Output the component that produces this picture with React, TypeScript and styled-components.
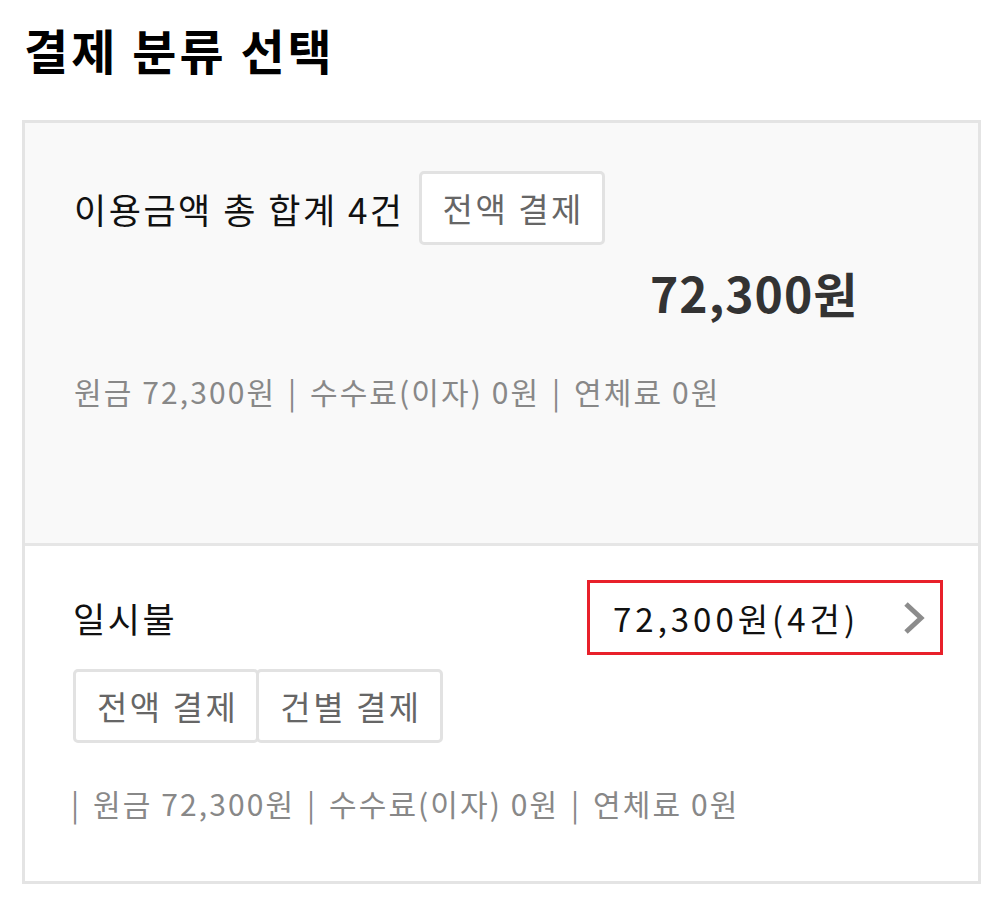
import React from 'react';
import styled, { createGlobalStyle } from 'styled-components';

const GlobalStyle = createGlobalStyle`
  body {
    margin: 0;
    background: #ffffff;
    font-family: 'Noto Sans CJK KR', 'Noto Sans', sans-serif;
  }
`;

const Page = styled.div`
  width: 1005px;
  padding: 18px 22px 0 22px;
  box-sizing: border-box;
`;

const Title = styled.h1`
  margin: 0 0 40px 2px;
  font-size: 48px;
  font-weight: 700;
  color: #000;
  line-height: 62px;
  letter-spacing: 3px;
`;

const Card = styled.div`
  width: 959px;
  border: 3px solid #e4e4e4;
  box-sizing: border-box;
`;

const Summary = styled.section`
  height: 423px;
  background: #f9f9f9;
  border-bottom: 3px solid #e6e6e6;
  padding: 48px 49px 0 49px;
  box-sizing: border-box;
`;

const Row = styled.div`
  display: flex;
  align-items: center;
  gap: 14px;
`;

const Label = styled.span`
  font-size: 35px;
  color: #111;
  letter-spacing: 2.5px;
`;

const ButtonGroup = styled.div`
  display: flex;
`;

const OutlineButton = styled.button<{ $joined?: boolean }>`
  height: 74px;
  padding: 0 18px 0 21px;
  margin-left: ${p => (p.$joined ? '-3px' : '0')};
  border: 3px solid #e2e2e2;
  border-radius: 5px;
  background: #fff;
  color: #666;
  font-family: inherit;
  font-size: 33px;
  letter-spacing: 2.5px;
  cursor: pointer;
`;

const Total = styled.div`
  margin: 16px 0 0 0;
  padding-left: 576px;
  font-size: 48px;
  font-weight: 700;
  color: #333;
  line-height: 62px;
  letter-spacing: 1px;
`;

const Detail = styled.div`
  margin-top: 46px;
  font-size: 30px;
  color: #888;
  letter-spacing: 2.1px;
  white-space: pre;
`;

const Sep = styled.span<{ $lead?: boolean }>`
  margin: 0 3px 0 ${p => (p.$lead ? '0' : '3px')};
`;

const Item = styled.section`
  padding: 34px 35px 0 48px;
  height: 335px;
  box-sizing: border-box;
`;

const ItemHead = styled.div`
  display: flex;
  align-items: center;
  justify-content: space-between;
`;

const AmountLink = styled.a`
  display: flex;
  align-items: center;
  justify-content: space-between;
  width: 356px;
  height: 75px;
  padding: 0 13px 0 23px;
  box-sizing: border-box;
  border: 3px solid #e8202a;
  color: #111;
  font-size: 33px;
  letter-spacing: 4px;
  text-decoration: none;
`;

const Chevron = () => (
  <svg width="26" height="34" viewBox="0 0 26 34">
    <path d="M5 3 L20 17 L5 31" fill="none" stroke="#8c8c8c" strokeWidth="5" />
  </svg>
);

const ItemButtons = styled(ButtonGroup)`
  margin-top: 14px;
`;

const DetailBottom = styled(Detail)`
  margin-top: 38px;
  margin-left: -2px;
`;

const App = () => {
  return (
    <Page>
      <GlobalStyle />
      <Title>결제 분류 선택</Title>
      <Card>
        <Summary>
          <Row>
            <Label>이용금액 총 합계 4건</Label>
            <OutlineButton>전액 결제</OutlineButton>
          </Row>
          <Total>72,300원</Total>
          <Detail>
            원금 72,300원 <Sep>|</Sep> 수수료(이자) 0원 <Sep>|</Sep> 연체료 0원
          </Detail>
        </Summary>
        <Item>
          <ItemHead>
            <Label>일시불</Label>
            <AmountLink href="#">
              <span>72,300원(4건)</span>
              <Chevron />
            </AmountLink>
          </ItemHead>
          <ItemButtons>
            <OutlineButton>전액 결제</OutlineButton>
            <OutlineButton $joined>건별 결제</OutlineButton>
          </ItemButtons>
          <DetailBottom>
            <Sep $lead>|</Sep> 원금 72,300원 <Sep>|</Sep> 수수료(이자) 0원 <Sep>|</Sep> 연체료 0원
          </DetailBottom>
        </Item>
      </Card>
    </Page>
  );
};

export default App;
